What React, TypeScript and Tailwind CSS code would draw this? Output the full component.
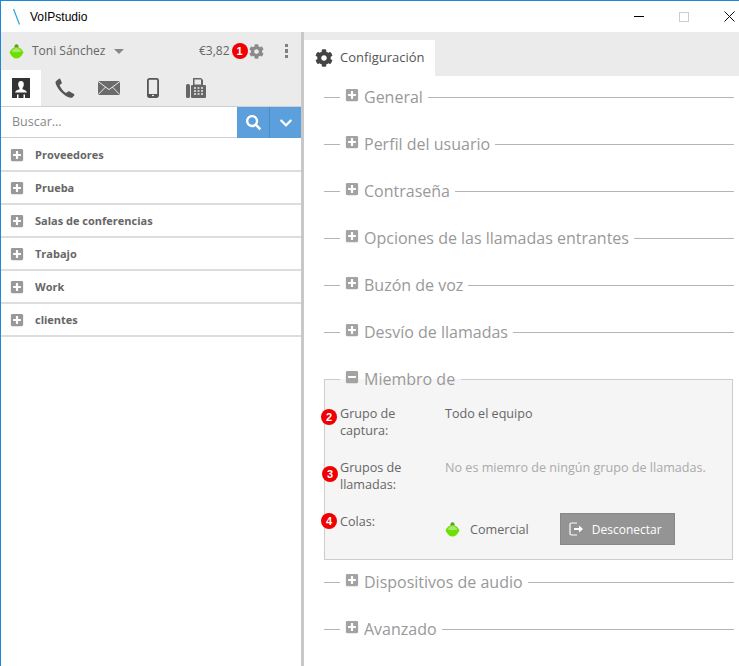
import { FaCog, FaChevronDown, FaMinusSquare, FaPlusSquare, FaSearch } from "react-icons/fa";

const groups = ["Proveedores", "Prueba", "Salas de conferencias", "Trabajo", "Work", "clientes"];

function Badge({ n }: { n: number }) {
  return (
    <span className="z-10 grid size-[16px] shrink-0 place-items-center rounded-full bg-[#f00000] font-['Liberation_Sans',sans-serif] text-[11px] leading-none font-bold text-white">
      {n}
    </span>
  );
}

function StatusDot() {
  return (
    <svg width="15" height="15" viewBox="0 0 15 15" className="shrink-0">
      <circle cx="7.5" cy="2.2" r="2" fill="#5f9a2c" />
      <path d="M0.5 8.5 Q3 3 7.5 3 Q12 3 14.5 8.5 Q11.5 14.5 7.5 14.5 Q3.5 14.5 0.5 8.5 Z" fill="#6ee000" />
      <path d="M2.5 7.5 Q4.5 4 7.5 4 Q10.5 4 12.5 7.5 Q7.5 9 2.5 7.5 Z" fill="#a9e86e" />
    </svg>
  );
}

function ContactIcon() {
  return (
    <svg width="18" height="20" viewBox="0 0 18 20">
      <rect width="18" height="20" fill="#333333" />
      <path d="M9 3 C11 3 12 4.6 11.8 6.8 C11.7 8.2 11.2 9.2 10.5 10 V11.2 C12.2 12 14.4 12.2 15 14.5 H3 C3.6 12.2 5.8 12 7.5 11.2 V10 C6.8 9.2 6.3 8.2 6.2 6.8 C6 4.6 7 3 9 3 Z" fill="#ffffff" />
      <rect x="5" y="16.5" width="1.5" height="3.5" fill="#ffffff" />
      <rect x="11.5" y="16.5" width="1.5" height="3.5" fill="#ffffff" />
    </svg>
  );
}

function PhoneIcon() {
  return (
    <svg width="20" height="20" viewBox="0 0 20 20">
      <path d="M1.2 3 L4 0.8 C4.5 0.4 5 0.6 5.2 1.1 L6.8 4.6 C7 5.1 6.8 5.5 6.4 5.8 L4.6 7 C5.6 10 8 13.2 11 15 L13.2 13.4 C13.6 13.1 14.1 13.1 14.5 13.4 L18.9 16 C19.5 16.4 19.6 17 19.2 17.5 L17.6 19.3 C17 19.9 16.2 20 15.2 19.7 C9 18 2.6 11.4 0.7 5.4 C0.4 4.4 0.5 3.6 1.2 3 Z" fill="#555555" />
    </svg>
  );
}

function MailIcon() {
  return (
    <svg width="22" height="14" viewBox="0 0 22 14">
      <rect width="22" height="14" fill="#6b6b6b" />
      <path d="M0 0.4 L11 8.6 L22 0.4 M0 13.8 L7.6 6 M22 13.8 L14.4 6" stroke="#ebebeb" strokeWidth="1" fill="none" />
    </svg>
  );
}

function MobileIcon() {
  return (
    <svg width="12" height="20" viewBox="0 0 12 20">
      <rect x="0.9" y="0.9" width="10.2" height="18.2" rx="1.5" fill="none" stroke="#555555" strokeWidth="1.8" />
      <rect x="1" y="16" width="10" height="3" fill="#555555" />
      <rect x="5" y="16.9" width="2" height="1.2" fill="#ebebeb" />
    </svg>
  );
}

function FaxIcon() {
  return (
    <svg width="20" height="20" viewBox="0 0 20 20">
      <rect x="0" y="6" width="4" height="14" rx="1.5" fill="#666666" />
      <path d="M7 0 H15 L17 2 V7 H19 Q20 7 20 8 V19 Q20 20 19 20 H6 Q5 20 5 19 V8 Q5 7 6 7 H7 Z" fill="#666666" />
      <rect x="8.5" y="1.5" width="6.5" height="5" fill="#ebebeb" />
      <path d="M8 10 H10 M11.5 10 H13.5 M15 10 H17 M8 13 H10 M11.5 13 H13.5 M15 13 H17 M8 16 H10 M11.5 16 H13.5 M15 16 H17" stroke="#ebebeb" strokeWidth="1.6" />
    </svg>
  );
}

function DisconnectIcon() {
  return (
    <svg width="15" height="14" viewBox="0 0 15 14" fill="none" stroke="#ffffff" strokeWidth="1.2">
      <path d="M8 1 H2.5 Q1 1 1 2.5 V11.5 Q1 13 2.5 13 H8" />
      <path d="M5 7 H10" strokeWidth="2" />
      <path d="M10 3.5 L14 7 L10 10.5 Z" fill="#ffffff" stroke="none" />
    </svg>
  );
}

function Section({ title }: { title: string }) {
  return (
    <div className="flex h-[47px] items-start">
      <div className="flex h-[22px] w-full items-center">
        <span className="h-px w-[16px] bg-[#b5b5b5]" />
        <FaPlusSquare className="mt-[-5px] ml-[5px] size-[14px] text-[#a3a3a3]" />
        <span className="ml-[5px] text-[16px] leading-[22px] text-[#999999]">{title}</span>
        <span className="ml-[5px] h-px flex-1 bg-[#b5b5b5]" />
      </div>
    </div>
  );
}

export default function App() {
  return (
    <div className="relative flex h-[666px] w-[739px] flex-col overflow-hidden border-t border-l border-[#1e88d8] bg-white font-['Open_Sans',sans-serif] text-[#555]">
      {/* title bar */}
      <div className="flex h-[31px] shrink-0 items-center">
        <svg width="10" height="18" viewBox="0 0 10 18" className="ml-[11px]">
          <path d="M1.5 1 L7.5 16.5" stroke="#2aa7d6" strokeWidth="1.2" />
        </svg>
        <span className="ml-[8px] font-['Liberation_Sans',sans-serif] text-[12px] text-black">VoIPstudio</span>
        <div className="ml-auto flex items-center">
          <span className="h-px w-[10px] bg-black" />
          <span className="ml-[35px] size-[10px] border border-[#cccccc]" />
          <svg width="11" height="11" viewBox="0 0 11 11" className="mr-[4px] ml-[35px]">
            <path d="M0.5 0.5 L10.5 10.5 M10.5 0.5 L0.5 10.5" stroke="#111" strokeWidth="1" />
          </svg>
        </div>
      </div>

      <div className="flex min-h-0 flex-1">
        {/* left panel */}
        <div className="w-[300px] shrink-0">
          <div className="flex h-[38px] items-center bg-[#ebebeb] pl-[8px]">
            <StatusDot />
            <span className="ml-[8px] text-[12px] text-[#666]">Toni Sánchez</span>
            <span className="ml-[9px] h-0 w-0 border-x-[5px] border-t-[5px] border-x-transparent border-t-[#888]" />
            <span className="ml-auto text-[12px] text-[#666]">€3,82</span>
            <span className="ml-[2px]"><Badge n={1} /></span>
            <FaCog className="ml-[1px] size-[15px] text-[#8a8a8a]" />
            <span className="mr-[13px] ml-[21px] flex flex-col gap-[2px]">
              <span className="size-[3.5px] bg-[#808080]" />
              <span className="size-[3.5px] bg-[#808080]" />
              <span className="size-[3.5px] bg-[#808080]" />
            </span>
          </div>

          <div className="flex h-[36px] bg-[#ebebeb]">
            <div className="grid w-[40px] place-items-center bg-white pb-[1px]"><ContactIcon /></div>
            <div className="grid w-[44px] place-items-center pl-[4px]"><PhoneIcon /></div>
            <div className="grid w-[46px] place-items-center pl-[1px]"><MailIcon /></div>
            <div className="grid w-[42px] place-items-center pl-[2px]"><MobileIcon /></div>
            <div className="grid w-[46px] place-items-center"><FaxIcon /></div>
          </div>

          <div className="flex h-[32px] border-t border-[#cfcfcf]">
            <div className="flex flex-1 items-center border-b border-[#cfcfcf] pl-[11px] text-[12.5px] text-[#888]">Buscar...</div>
            <div className="grid w-[32px] place-items-center bg-[#5b9fdc]"><FaSearch className="size-[15px] text-white" /></div>
            <div className="grid w-[32px] place-items-center border-l border-[#4c8cc5] bg-[#5b9fdc]"><FaChevronDown className="size-[14px] text-white" /></div>
          </div>

          <div className="pt-px">
            {groups.map((g) => (
              <div key={g} className="flex h-[33px] items-center border-b-2 border-[#dddddd] pl-[9px]">
                <FaPlusSquare className="size-[14px] text-[#999]" />
                <span className="mt-[2px] ml-[11px] text-[11px] font-bold text-[#666]">{g}</span>
              </div>
            ))}
          </div>
        </div>

        <div className="w-[3px] shrink-0 bg-[#c8c8c8]" />

        {/* right panel */}
        <div className="min-w-0 flex-1">
          <div className="flex h-[44px] items-end bg-[#ebebeb]">
            <div className="flex h-[36px] w-[131px] items-center bg-white pl-[11px]">
              <FaCog className="size-[18px] text-[#444]" />
              <span className="ml-[7px] text-[13px] text-[#555]">Configuración</span>
            </div>
          </div>

          <div className="mr-[5px] ml-[20px] pt-[10px]">
            {["General", "Perfil del usuario", "Contraseña", "Opciones de las llamadas entrantes", "Buzón de voz", "Desvío de llamadas"].map((t) => (
              <Section key={t} title={t} />
            ))}

            <fieldset className="mr-px mb-[11px] h-[192px] border border-[#cccccc] bg-[#f5f5f5] px-0 pt-0">
              <legend className="ml-[15px] flex h-[22px] items-center px-[6px]">
                <FaMinusSquare className="mt-[-5px] ml-[-1px] size-[14px] text-[#a3a3a3]" />
                <span className="ml-[5px] text-[16px] leading-[22px] text-[#999999]">Miembro de</span>
              </legend>
              <div className="mt-[15px] pl-[15px] text-[12.6px] leading-[17px] text-[#666]">
                <div className="flex h-[54px]">
                  <span className="w-[105px]">Grupo de<br />captura:</span>
                  <span className="text-[#666]">Todo el equipo</span>
                </div>
                <div className="flex h-[54px]">
                  <span className="w-[105px]">Grupos de<br />llamadas:</span>
                  <span className="text-[#aaa]">No es miemro de ningún grupo de llamadas.</span>
                </div>
                <div className="flex">
                  <span className="w-[105px]">Colas:</span>
                  <div className="flex items-center">
                    <StatusDot />
                    <span className="ml-[10px] text-[#666]">Comercial</span>
                    <button className="ml-[31px] flex h-[32px] w-[115px] items-center border border-[#888] bg-[#949494] pl-[8px] text-[12px] text-white">
                      <DisconnectIcon />
                      <span className="ml-[8px]">Desconectar</span>
                    </button>
                  </div>
                </div>
              </div>
            </fieldset>

            <Section title="Dispositivos de audio" />
            <Section title="Avanzado" />
          </div>
        </div>
      </div>

      {/* callouts sit over the form rows */}
      <div className="absolute top-[408px] left-[320px]"><Badge n={2} /></div>
      <div className="absolute top-[465px] left-[321px]"><Badge n={3} /></div>
      <div className="absolute top-[512px] left-[320px]"><Badge n={4} /></div>
    </div>
  );
}
